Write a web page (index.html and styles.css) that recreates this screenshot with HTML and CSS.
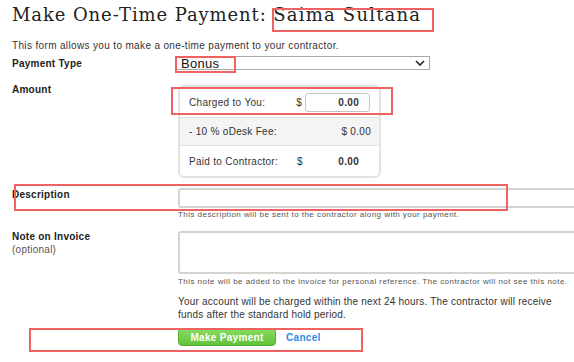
FILE: index.html
```html
<!DOCTYPE html>
<html lang="en">
<head>
    <meta charset="UTF-8">
    <meta name="viewport" content="width=device-width, initial-scale=1.0">
    <title>Make One-Time Payment</title>
    <link rel="stylesheet" href="styles.css">
</head>
<body>
    <div class="page">
        <h1>Make One-Time Payment: <span class="name">Saima Sultana</span></h1>
        <p class="intro">This form allows you to make a one-time payment to your contractor.</p>

        <div class="row row-type">
            <label class="label" for="type">Payment Type</label>
            <div class="field">
                <div class="select" id="type">
                    <span>Bonus</span>
                    <svg class="chevron" width="10" height="6" viewBox="0 0 10 6">
                        <path d="M1 1 L5 5 L9 1" fill="none" stroke="#222" stroke-width="1.6"/>
                    </svg>
                </div>
            </div>
        </div>

        <div class="row row-amount">
            <div class="label">Amount</div>
            <div class="field">
                <div class="fees">
                    <div class="fee-row">
                        <span class="fee-label">Charged to You:</span>
                        <span class="dollar">$</span>
                        <div class="amount-input">0.00</div>
                    </div>
                    <div class="fee-row fee-grey">
                        <span class="fee-label">- 10 % oDesk Fee:</span>
                        <span class="fee-total">$ 0.00</span>
                    </div>
                    <div class="fee-row">
                        <span class="fee-label">Paid to Contractor:</span>
                        <span class="dollar">$</span>
                        <span class="amount-value">0.00</span>
                    </div>
                </div>
            </div>
        </div>

        <div class="row row-desc">
            <label class="label" for="desc">Description</label>
            <div class="field">
                <div class="text-input" id="desc"></div>
                <p class="hint">This description will be sent to the contractor along with your payment.</p>
            </div>
        </div>

        <div class="row row-note">
            <div class="label">
                <label for="note">Note on Invoice</label>
                <span class="optional">(optional)</span>
            </div>
            <div class="field">
                <div class="text-area" id="note"></div>
                <p class="hint">This note will be added to the invoice for personal reference. The contractor will not see this note.</p>
                <p class="notice">Your account will be charged within the next 24 hours. The contractor will receive funds after the standard hold period.</p>
                <div class="actions">
                    <button class="btn-pay">Make Payment</button>
                    <a class="cancel" href="#">Cancel</a>
                </div>
            </div>
        </div>

        <!-- red annotation boxes drawn over the screenshot -->
        <div class="mark mark-name"></div>
        <div class="mark mark-bonus"></div>
        <div class="mark mark-charged"></div>
        <div class="mark mark-desc"></div>
        <div class="mark mark-actions"></div>
    </div>
</body>
</html>
```

FILE: styles.css
```css
body {
    margin: 0;
    font-family: "Liberation Sans", Arial, sans-serif;
    color: #333;
    background: #fff;
    overflow: hidden;
}
.page {
    position: relative;
    padding: 0 0 0 12px;
    height: 362px;
}
h1 {
    margin: 0;
    padding-top: 4px;
    height: 32px;
    font-family: "DejaVu Serif", serif;
    font-weight: normal;
    font-size: 18px;
    letter-spacing: 0.9px;
    line-height: 22px;
    color: #222;
}
.name {
    letter-spacing: 1.2px;
}
.intro {
    margin: 4px 0 0;
    font-size: 10px;
    letter-spacing: 0.35px;
    line-height: 12px;
    color: #333;
}
.row {
    display: grid;
    grid-template-columns: 166px 1fr;
}
.label {
    font-size: 10px;
    font-weight: bold;
    letter-spacing: 0.25px;
    line-height: 10px;
    color: #222;
}
.optional {
    display: block;
    margin-top: 3px;
    font-weight: normal;
    color: #555;
}
.row-type {
    margin-top: 4px;
}
.row-type .label {
    padding-top: 3px;
}
.select {
    display: flex;
    align-items: center;
    justify-content: space-between;
    margin-left: -2px;
    width: 244px;
    height: 12px;
    padding: 0 4px 0 4px;
    border: 1px solid #a9a9a9;
    font-size: 13px;
    letter-spacing: 0.3px;
    color: #111;
}
.row-amount {
    margin-top: 15px;
}
.fees {
    width: 199px;
    border: 2px solid #e3e3e0;
    border-radius: 6px;
    font-size: 10px;
    letter-spacing: 0.3px;
}
.fee-row {
    display: flex;
    align-items: center;
    height: 30px;
    padding: 0 9px;
}
.fee-row + .fee-row {
    border-top: 1px solid #e3e3e0;
}
.fee-grey {
    height: 27px;
    background: #f4f4f4;
}
.fee-label {
    width: 108px;
    white-space: nowrap;
}
.dollar {
    width: 9px;
}
.amount-input {
    width: 53px;
    height: 17px;
    line-height: 17px;
    padding-right: 10px;
    border: 1px solid #c4c4c0;
    border-radius: 3px;
    text-align: right;
    font-weight: bold;
}
.amount-value {
    width: 53px;
    text-align: right;
    font-weight: bold;
}
.fee-total {
    margin-left: auto;
    margin-right: -1px;
    white-space: nowrap;
}
.row-desc {
    margin-top: 10px;
}
.row-desc .label {
    padding-top: 2px;
}
.text-input {
    width: 420px;
    height: 16px;
    border: 2px solid #d3d3cf;
    border-radius: 3px;
}
.hint {
    margin: 2px 0 0;
    font-size: 8px;
    letter-spacing: 0.45px;
    line-height: 10px;
    color: #555;
    white-space: nowrap;
}
.row-note {
    margin-top: 11px;
}
.row-note .label {
    padding-top: 1px;
}
.text-area {
    width: 420px;
    height: 39px;
    border: 2px solid #d3d3cf;
    border-radius: 3px;
}
.row-note .hint {
    margin-top: 3px;
}
.notice {
    margin: 8px 0 0;
    font-size: 10px;
    letter-spacing: 0.2px;
    line-height: 13px;
    color: #333;
    width: 392px;
}
.actions {
    display: flex;
    align-items: center;
    margin-top: 7px;
}
.btn-pay {
    width: 98px;
    height: 18px;
    padding: 0;
    border: 1px solid #55ad30;
    border-radius: 4px;
    background: linear-gradient(#86dc5e, #63c23a);
    color: #fff;
    font-family: "Liberation Sans", Arial, sans-serif;
    font-size: 10px;
    letter-spacing: 0.3px;
    font-weight: bold;
}
.cancel {
    margin-left: 10px;
    font-size: 10px;
    letter-spacing: 0.3px;
    font-weight: bold;
    color: #2a8ce3;
    text-decoration: none;
}
.mark {
    position: absolute;
    border: 2px solid #f06262;
}
.mark-name { left: 272px; top: 8px; width: 158px; height: 20px; }
.mark-bonus { left: 175px; top: 56px; width: 57px; height: 13px; }
.mark-charged { left: 171px; top: 87px; width: 218px; height: 24px; }
.mark-desc { left: 14px; top: 184px; width: 490px; height: 23px; }
.mark-actions { left: 29px; top: 328px; width: 330px; height: 20px; }
```
